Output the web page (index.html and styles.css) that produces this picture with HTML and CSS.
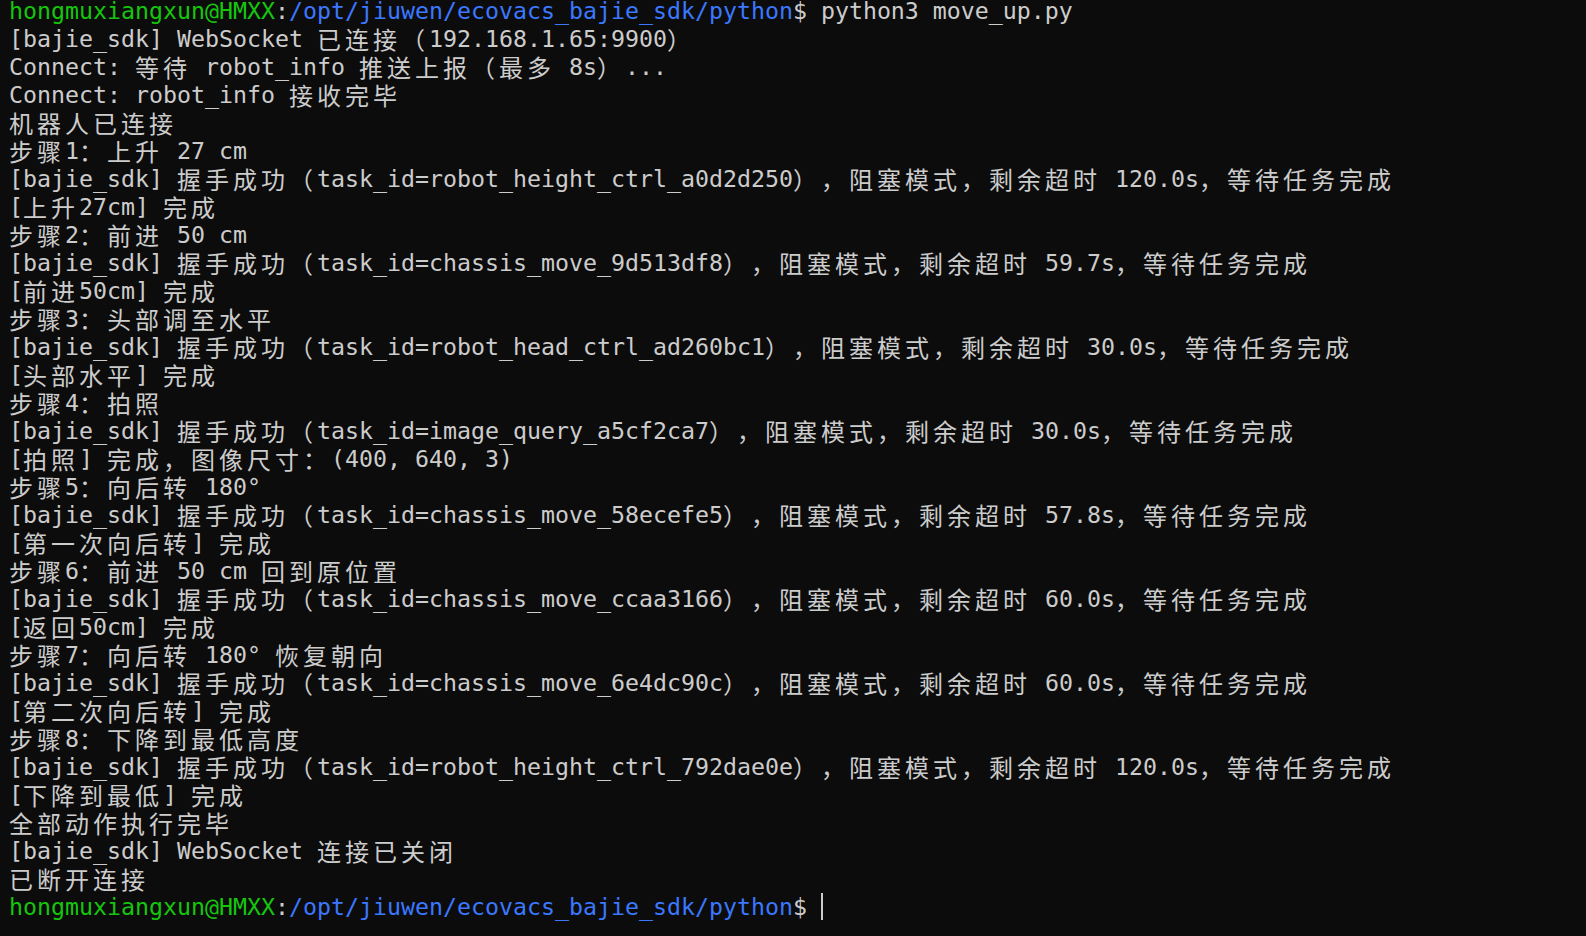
FILE: index.html
```html
<!DOCTYPE html>
<html lang="zh-CN">
<head>
<meta charset="utf-8">
<title>Terminal</title>
<link rel="stylesheet" href="styles.css">
</head>
<body>
<pre class="term"><span class="g">hongmuxiangxun@HMXX</span>:<span class="b">/opt/jiuwen/ecovacs_bajie_sdk/python</span>$ python3 move_up.py
[bajie_sdk] WebSocket <span class="c">已连接（</span>192.168.1.65:9900<span class="c">）</span>
Connect: <span class="c">等待</span> robot_info <span class="c">推送上报（最多</span> 8s<span class="c">）</span>...
Connect: robot_info <span class="c">接收完毕</span>
<span class="c">机器人已连接</span>
<span class="c">步骤</span>1<span class="c">：上升</span> 27 cm
[bajie_sdk] <span class="c">握手成功（</span>task_id=robot_height_ctrl_a0d2d250<span class="c">），阻塞模式，剩余超时</span> 120.0s<span class="c">，等待任务完成</span>
[<span class="c">上升</span>27cm] <span class="c">完成</span>
<span class="c">步骤</span>2<span class="c">：前进</span> 50 cm
[bajie_sdk] <span class="c">握手成功（</span>task_id=chassis_move_9d513df8<span class="c">），阻塞模式，剩余超时</span> 59.7s<span class="c">，等待任务完成</span>
[<span class="c">前进</span>50cm] <span class="c">完成</span>
<span class="c">步骤</span>3<span class="c">：头部调至水平</span>
[bajie_sdk] <span class="c">握手成功（</span>task_id=robot_head_ctrl_ad260bc1<span class="c">），阻塞模式，剩余超时</span> 30.0s<span class="c">，等待任务完成</span>
[<span class="c">头部水平</span>] <span class="c">完成</span>
<span class="c">步骤</span>4<span class="c">：拍照</span>
[bajie_sdk] <span class="c">握手成功（</span>task_id=image_query_a5cf2ca7<span class="c">），阻塞模式，剩余超时</span> 30.0s<span class="c">，等待任务完成</span>
[<span class="c">拍照</span>] <span class="c">完成，图像尺寸：</span>(400, 640, 3)
<span class="c">步骤</span>5<span class="c">：向后转</span> 180°
[bajie_sdk] <span class="c">握手成功（</span>task_id=chassis_move_58ecefe5<span class="c">），阻塞模式，剩余超时</span> 57.8s<span class="c">，等待任务完成</span>
[<span class="c">第一次向后转</span>] <span class="c">完成</span>
<span class="c">步骤</span>6<span class="c">：前进</span> 50 cm <span class="c">回到原位置</span>
[bajie_sdk] <span class="c">握手成功（</span>task_id=chassis_move_ccaa3166<span class="c">），阻塞模式，剩余超时</span> 60.0s<span class="c">，等待任务完成</span>
[<span class="c">返回</span>50cm] <span class="c">完成</span>
<span class="c">步骤</span>7<span class="c">：向后转</span> 180° <span class="c">恢复朝向</span>
[bajie_sdk] <span class="c">握手成功（</span>task_id=chassis_move_6e4dc90c<span class="c">），阻塞模式，剩余超时</span> 60.0s<span class="c">，等待任务完成</span>
[<span class="c">第二次向后转</span>] <span class="c">完成</span>
<span class="c">步骤</span>8<span class="c">：下降到最低高度</span>
[bajie_sdk] <span class="c">握手成功（</span>task_id=robot_height_ctrl_792dae0e<span class="c">），阻塞模式，剩余超时</span> 120.0s<span class="c">，等待任务完成</span>
[<span class="c">下降到最低</span>] <span class="c">完成</span>
<span class="c">全部动作执行完毕</span>
[bajie_sdk] WebSocket <span class="c">连接已关闭</span>
<span class="c">已断开连接</span>
<span class="g">hongmuxiangxun@HMXX</span>:<span class="b">/opt/jiuwen/ecovacs_bajie_sdk/python</span>$ <span class="cursor"></span></pre>
</body>
</html>
```

FILE: styles.css
```css
html, body {
  margin: 0;
  padding: 0;
  background: #0c0c0c;
  height: 100%;
  overflow: hidden;
}

.term {
  margin: -3px 0 0 0;
  padding: 0 0 0 9px;
  font-family: "DejaVu Sans Mono", "Liberation Mono", monospace;
  font-size: 23.25px;
  line-height: 28px;
  color: #cccccc;
  white-space: pre;
  text-spacing-trim: space-all;
  font-kerning: none;
}

.g {
  color: #16c60c;
}

.b {
  color: #3b78ff;
}

.c {
  font-family: "Noto Sans CJK SC", "Noto Sans CJK JP", sans-serif;
  font-size: 24px;
  letter-spacing: 4px;
  line-height: 20px;
  vertical-align: -2px;
}

.cursor {
  display: inline-block;
  width: 2px;
  height: 27px;
  background: #cccccc;
  vertical-align: -5px;
}
```
